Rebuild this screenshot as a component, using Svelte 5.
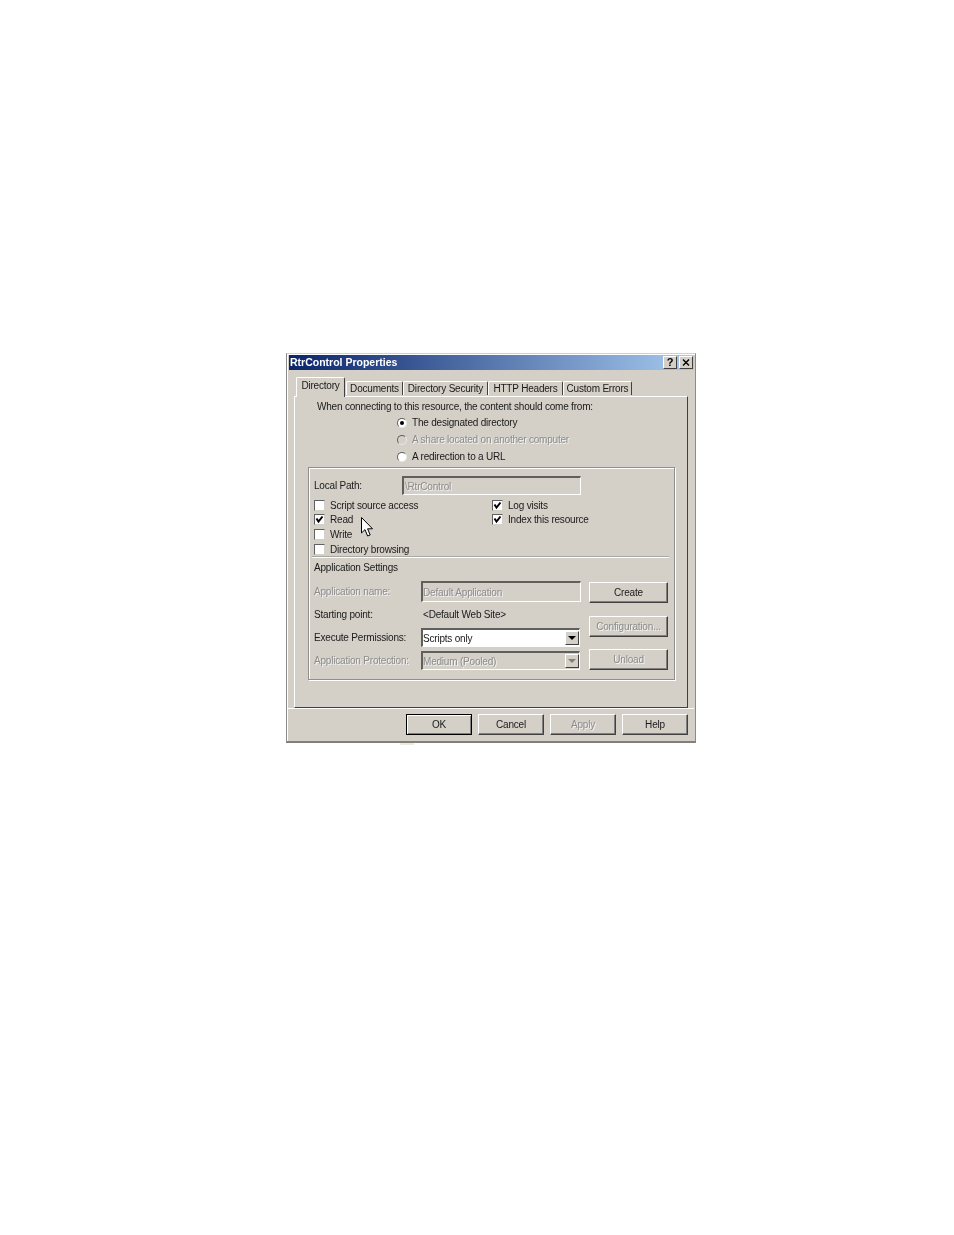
<script>
	const tabs = [
		{ label: 'Directory', width: 49, active: true },
		{ label: 'Documents', width: 57 },
		{ label: 'Directory Security', width: 85 },
		{ label: 'HTTP Headers', width: 75 },
		{ label: 'Custom Errors', width: 69 }
	];

	const radios = [
		{ label: 'The designated directory', checked: true },
		{ label: 'A share located on another computer', disabled: true },
		{ label: 'A redirection to a URL' }
	];

	const leftChecks = [
		{ label: 'Script source access' },
		{ label: 'Read', checked: true },
		{ label: 'Write' },
		{ label: 'Directory browsing' }
	];

	const rightChecks = [
		{ label: 'Log visits', checked: true },
		{ label: 'Index this resource', checked: true }
	];
</script>

{#snippet check(item)}
	<div class="check">
		<span class="box">
			{#if item.checked}
				<svg width="9" height="9" viewBox="0 0 9 9"><path d="M1.5 3.5 L3.5 6.5 L7.5 1.5" fill="none" stroke="#000" stroke-width="2" /></svg>
			{/if}
		</span>
		<span>{item.label}</span>
	</div>
{/snippet}

<div class="page">
	<div class="dialog">
		<div class="titlebar">
			<span class="title">RtrControl Properties</span>
			<div class="caption-buttons">
				<span class="caption-btn help-btn">?</span>
				<span class="caption-btn">
					<svg width="8" height="7" viewBox="0 0 8 7"><path d="M1 0.5 L7 6.5 M7 0.5 L1 6.5" stroke="#000" stroke-width="1.4" /></svg>
				</span>
			</div>
		</div>

		<div class="tabs">
			{#each tabs as tab}
				<div class="tab" class:active={tab.active} style="width: {tab.width}px">{tab.label}</div>
			{/each}
		</div>

		<div class="panel">
			<div class="intro">When connecting to this resource, the content should come from:</div>

			<div class="radios">
				{#each radios as radio}
					<div class="radio-row" class:disabled={radio.disabled}>
						<span class="radio">
							{#if radio.checked}<span class="dot"></span>{/if}
						</span>
						<span>{radio.label}</span>
					</div>
				{/each}
			</div>

			<div class="group">
				<div class="path-row">
					<span class="path-label">Local Path:</span>
					<div class="input path-input disabled-field">\RtrControl</div>
				</div>

				<div class="checks">
					<div class="check-col left">
						{#each leftChecks as item}
							{@render check(item)}
						{/each}
					</div>
					<div class="check-col">
						{#each rightChecks as item}
							{@render check(item)}
						{/each}
					</div>
				</div>

				<div class="separator"></div>
				<div class="settings-title">Application Settings</div>

				<div class="settings">
					<div class="fields">
						<div class="field disabled">
							<span class="field-label">Application name:</span>
							<div class="input value disabled-field">Default Application</div>
						</div>
						<div class="field">
							<span class="field-label">Starting point:</span>
							<span class="plain">&lt;Default Web Site&gt;</span>
						</div>
						<div class="field">
							<span class="field-label">Execute Permissions:</span>
							<div class="input select">
								<span>Scripts only</span>
								<span class="arrow"><i></i></span>
							</div>
						</div>
						<div class="field disabled">
							<span class="field-label">Application Protection:</span>
							<div class="input select disabled-field">
								<span>Medium (Pooled)</span>
								<span class="arrow off"><i></i></span>
							</div>
						</div>
					</div>
					<div class="side-buttons">
						<div class="btn">Create</div>
						<div class="btn off">Configuration...</div>
						<div class="btn off">Unload</div>
					</div>
				</div>
			</div>
		</div>

		<div class="footer">
			<div class="btn wide default">OK</div>
			<div class="btn wide">Cancel</div>
			<div class="btn wide off">Apply</div>
			<div class="btn wide">Help</div>
		</div>

		<svg class="cursor" width="13" height="21" viewBox="0 0 13 21">
			<path d="M0.5 0.5 V16 L4 12.6 L6.6 19 L9.2 18 L6.6 11.8 H11.5 Z" fill="#fff" stroke="#000" stroke-width="1" />
		</svg>
		<span class="speck"></span>
	</div>
</div>

<style>
	:global(body) {
		margin: 0;
		background: #fff;
	}

	.page {
		height: 1235px;
		box-sizing: border-box;
		padding: 353px 0 0 286px;
	}

	.page * {
		box-sizing: border-box;
	}

	.dialog {
		position: relative;
		width: 410px;
		height: 390px;
		background: #d4d0c8;
		border: 1px solid #8a8a86;
		border-top-color: #d4d0c8;
		border-bottom: 2px solid #80807c;
		box-shadow: inset 1px 1px 0 #fff;
		font-family: "Liberation Sans", Arial, sans-serif;
		font-size: 10px;
		letter-spacing: -0.2px;
		color: #1a1a1a;
		filter: blur(0.45px);
		padding: 1px 1px 0 1px;
	}

	.titlebar {
		height: 15px;
		margin-left: 1px;
		background: linear-gradient(90deg, #0a246a, #a6caf0);
		display: flex;
		align-items: center;
		justify-content: space-between;
		padding: 0 1px 0 1px;
	}

	.title {
		color: #fff;
		font-weight: bold;
		font-size: 10.5px;
		letter-spacing: 0;
		line-height: 13px;
		margin-bottom: 1px;
	}

	.caption-buttons {
		display: flex;
		gap: 2px;
	}

	.caption-btn {
		width: 14px;
		height: 13px;
		background: #d4d0c8;
		border: 1px solid;
		border-color: #fff #404040 #404040 #fff;
		display: flex;
		align-items: center;
		justify-content: center;
		font-weight: bold;
		font-size: 11px;
		color: #000;
	}

	.help-btn {
		line-height: 1;
	}

	.tabs {
		display: flex;
		align-items: flex-end;
		height: 26px;
		margin-left: 8px;
		position: relative;
		z-index: 1;
	}

	.tab {
		height: 14px;
		background: #d4d0c8;
		border: 1px solid;
		border-color: #fff #404040 transparent #fff;
		border-bottom: 0;
		border-radius: 2px 2px 0 0;
		text-align: center;
		line-height: 13px;
		margin-bottom: 1px;
		white-space: nowrap;
	}

	.tab.active {
		height: 20px;
		margin-bottom: -1px;
		line-height: 16px;
		margin-right: 1px;
	}

	.panel {
		width: 394px;
		height: 312px;
		margin-left: 6px;
		border: 1px solid;
		border-color: #fff #404040 #404040 #fff;
		padding: 0 0 0 13px;
	}

	.intro {
		margin-left: 9px;
		height: 19px;
		line-height: 19px;
	}

	.radios {
		margin-left: 89px;
		margin-top: -2px;
	}

	.radio-row {
		height: 17px;
		display: flex;
		align-items: center;
		gap: 5px;
		white-space: nowrap;
	}

	.radio {
		width: 10px;
		height: 10px;
		border-radius: 50%;
		background: #fff;
		border: 1px solid;
		border-color: #606060 #e8e8e8 #e8e8e8 #606060;
		display: flex;
		align-items: center;
		justify-content: center;
	}

	.dot {
		width: 4px;
		height: 4px;
		border-radius: 50%;
		background: #000;
	}

	.disabled,
	.disabled .field-label {
		color: #8c8c8c;
		text-shadow: 1px 1px 0 #f4f4f4;
	}

	.radio-row.disabled .radio {
		background: #d4d0c8;
	}

	.group {
		width: 367px;
		height: 213px;
		margin-top: 2px;
		border: 1px solid #8f8f8b;
		box-shadow: 1px 1px 0 #fff, inset 1px 1px 0 #fff;
		padding: 0 4px 0 5px;
	}

	.path-row {
		display: flex;
		align-items: center;
		height: 19px;
		margin-top: 8px;
	}

	.path-label {
		width: 88px;
	}

	.input {
		border: 2px solid;
		border-color: #5f5f5b #fff #fff #5f5f5b;
		border-width: 2px 1px 1px 2px;
		white-space: nowrap;
		display: flex;
		align-items: center;
	}

	.path-input {
		width: 179px;
		height: 19px;
		padding-left: 1px;
	}

	.disabled-field {
		color: #8c8c8c;
		text-shadow: 1px 1px 0 #f4f4f4;
		background: #d4d0c8;
	}

	.checks {
		display: flex;
		margin-top: 3px;
	}

	.check-col.left {
		width: 178px;
	}

	.check {
		height: 14.6px;
		display: flex;
		align-items: center;
		gap: 5px;
	}

	.box {
		width: 11px;
		height: 11px;
		background: #fff;
		border: 1px solid;
		border-color: #606060 #d4d0c8 #d4d0c8 #606060;
		display: flex;
		align-items: center;
		justify-content: center;
	}

	.separator {
		height: 2px;
		margin: 0 1px 0 -2px;
		background: #a8a8a4;
		border-bottom: 1px solid #fff;
	}

	.settings-title {
		height: 19px;
		line-height: 19px;
	}

	.settings {
		display: flex;
		justify-content: space-between;
		margin-top: 4px;
	}

	.fields {
		width: 268px;
		margin-top: 1px;
		display: flex;
		flex-direction: column;
		gap: 4px;
	}

	.field {
		display: flex;
		align-items: center;
		height: 19px;
		white-space: nowrap;
	}

	.field-label {
		width: 107px;
		flex: none;
	}

	.value {
		width: 160px;
		height: 21px;
		margin-top: 0;
	}

	.plain {
		padding-left: 2px;
	}

	.select {
		width: 159px;
		height: 19px;
		background: #fff;
		justify-content: space-between;
	}

	.select.disabled-field {
		background: #d4d0c8;
	}

	.arrow {
		width: 14px;
		height: 14px;
		background: #d4d0c8;
		border: 1px solid;
		border-color: #fff #404040 #404040 #fff;
		display: flex;
		align-items: center;
		justify-content: center;
	}

	.arrow i {
		width: 0;
		height: 0;
		border-left: 4px solid transparent;
		border-right: 4px solid transparent;
		border-top: 4px solid #000;
	}

	.arrow.off i {
		border-top-color: #808080;
	}

	.side-buttons {
		display: flex;
		flex-direction: column;
		gap: 12.5px;
		margin: 1px 2px 0 0;
	}

	.btn {
		width: 79px;
		height: 21px;
		background: #d4d0c8;
		border: 1px solid;
		border-color: #fff #404040 #404040 #fff;
		box-shadow: inset -1px -1px 0 #808080;
		display: flex;
		align-items: center;
		justify-content: center;
	}

	.btn.off {
		color: #8c8c8c;
		text-shadow: 1px 1px 0 #f4f4f4;
	}

	.footer {
		border-top: 1px solid #fff;
		display: flex;
		justify-content: flex-end;
		gap: 6px;
		padding: 5px 6px 0 0;
	}

	.btn.wide {
		width: 66px;
	}

	.btn.default {
		border-color: #000;
		box-shadow: inset 1px 1px 0 #fff, inset -1px -1px 0 #808080;
	}

	.cursor {
		position: absolute;
		left: 74px;
		top: 163px;
	}

	.speck {
		position: absolute;
		left: 113px;
		top: 389px;
		width: 14px;
		height: 2px;
		background: #ecebdc;
	}
</style>
